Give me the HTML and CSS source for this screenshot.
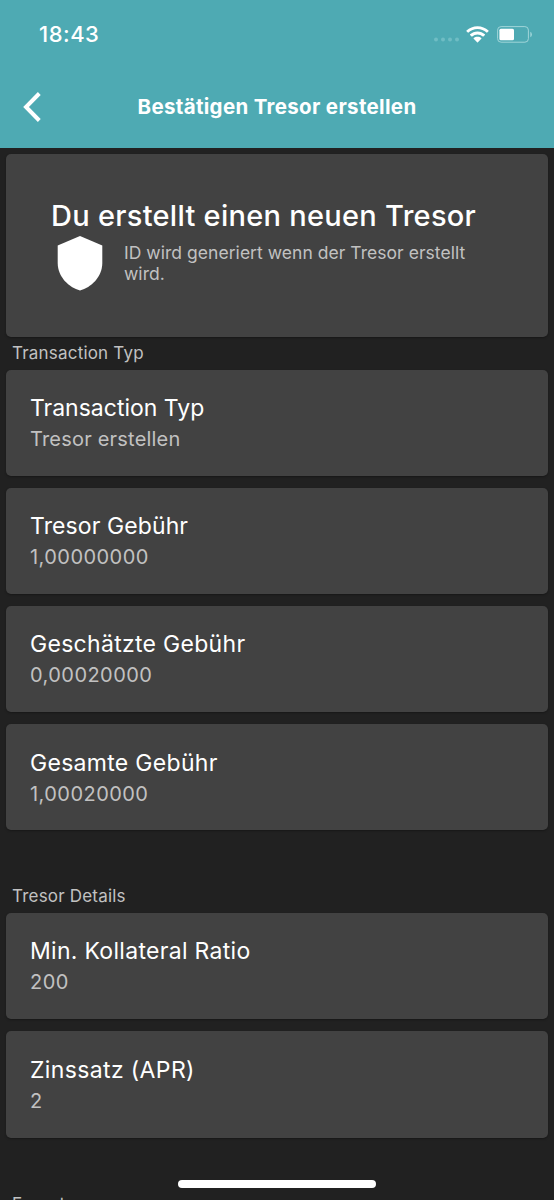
FILE: index.html
```html
<!DOCTYPE html>
<html lang="de">
<head>
<meta charset="utf-8">
<title>Bestätigen Tresor erstellen</title>
<link rel="stylesheet" href="styles.css">
</head>
<body>
<div class="screen">
  <header class="top">
    <div class="status">
      <span class="time">18:43</span>
      <div class="indicators">
        <svg class="signal" width="26" height="5" viewBox="0 0 26 5"><g fill="#6fbdc4"><circle cx="2" cy="2.5" r="2"/><circle cx="9" cy="2.5" r="2"/><circle cx="16" cy="2.5" r="2"/><circle cx="23" cy="2.5" r="2"/></g></svg>
        <svg class="wifi" width="23" height="17" viewBox="0 0 23 17"><path fill="#fff" d="M11.5.2C7.300.2 3.400 1.800.5 4.600Q.2 4.900.5 5.300L1.800 6.600Q2.200 6.900 2.500 6.600A13 13 0 0 1 20.500 6.600Q20.800 6.900 21.200 6.600L22.500 5.300Q22.800 4.900 22.500 4.600C19.600 1.800 15.700.2 11.500.2ZM11.500 5.500C8.600 5.500 6.100 6.600 4.100 8.300Q3.800 8.700 4.100 9L5.500 10.400Q5.900 10.700 6.200 10.400A8 8 0 0 1 16.800 10.400Q17.100 10.700 17.500 10.400L18.900 9Q19.200 8.700 18.900 8.300C16.900 6.600 14.400 5.500 11.500 5.500ZM11.500 10.700C10 10.700 8.700 11.200 7.700 12Q7.400 12.400 7.700 12.800L11.100 16.200Q11.500 16.600 11.900 16.200L15.300 12.800Q15.600 12.400 15.300 12C14.300 11.200 13 10.700 11.500 10.700Z"/></svg>
        <svg class="battery" width="36" height="17" viewBox="0 0 36 17"><rect x=".6" y=".6" width="30.800" height="15.600" rx="3.500" fill="none" stroke="#a0d5d9"/><rect x="2.400" y="2.700" width="14.600" height="11.500" rx="1.500" fill="#fff"/><path d="M33.300 5.700v5.500q1.600-.7 1.600-2.700t-1.600-2.800Z" fill="#a0d5d9"/></svg>
      </div>
    </div>
    <div class="nav">
      <svg class="back" width="18" height="30" viewBox="0 0 18 30"><path d="M16.300 1.500 3 15l13.300 13.500" fill="none" stroke="#fff" stroke-width="4"/></svg>
      <h1 class="heading">Bestätigen Tresor erstellen</h1>
    </div>
  </header>
  <main class="content">
    <section class="card intro">
      <h2 class="intro-title">Du erstellt einen neuen Tresor</h2>
      <div class="intro-row">
        <svg class="shield" width="46" height="55" viewBox="0 0 46 55"><path fill="#fff" d="M23 0 45.300 9.500V27C45.300 41 34 51.500 23 54.500 12 51.500.7 41 .7 27V9.500Z"/></svg>
        <p class="intro-text">ID wird generiert wenn der Tresor erstellt wird.</p>
      </div>
    </section>
    <h3 class="section">Transaction Typ</h3>
    <section class="list">
      <div class="card item"><span class="label tight">Transaction Typ</span><span class="value">Tresor erstellen</span></div>
      <div class="card item"><span class="label snug">Tresor Gebühr</span><span class="value amount">1,00000000</span></div>
      <div class="card item"><span class="label">Geschätzte Gebühr</span><span class="value amount">0,00020000</span></div>
      <div class="card item"><span class="label">Gesamte Gebühr</span><span class="value amount">1,00020000</span></div>
    </section>
    <h3 class="section later">Tresor Details</h3>
    <section class="list">
      <div class="card item"><span class="label">Min. Kollateral Ratio</span><span class="value amount">200</span></div>
      <div class="card item"><span class="label wide">Zinssatz (APR)</span><span class="value amount">2</span></div>
    </section>
    <h3 class="section later">Expert</h3>
  </main>
  <div class="home-bar"></div>
</div>
</body>
</html>
```
FILE: styles.css
```css
* { box-sizing: border-box; }
body { margin: 0; background: #212121; font-family: Inter, "Liberation Sans", sans-serif; }
h1, h2, h3, p { margin: 0; font-weight: 400; }
svg { display: block; flex: none; }
.screen { position: relative; width: 554px; height: 1200px; overflow: hidden; background: #212121; }
.top { height: 148px; background: #4eaab3; color: #fff; }
.status { height: 68px; padding: 0 21px 0 39px; display: flex; align-items: center; justify-content: space-between; }
.time { font-size: 22px; font-weight: 500; letter-spacing: .5px; }
.indicators { display: flex; align-items: center; }
.signal { margin: 11px 6px 0 0; }
.wifi { margin-right: 8px; }
.nav { height: 77px; padding-left: 23px; display: grid; grid-template-columns: 18px 1fr 41px; align-items: center; }
.heading { font-size: 20.500px; line-height: 25px; font-weight: 700; text-align: center; letter-spacing: .33px; padding-bottom: 1px; }
.content { padding: 6px 6px 0; }
.card { background: #424242; border-radius: 5px; box-shadow: 0 1px 2px #181818; }
.intro { height: 183px; padding: 44px 45px 0; }
.intro-title { color: #fff; font-size: 29px; line-height: 36px; font-weight: 500; letter-spacing: .28px; white-space: nowrap; }
.intro-row { display: flex; padding: 2px 0 0 6px; gap: 21px; }
.intro-text { width: 360px; padding-top: 7px; color: #c1c1c1; font-size: 17.500px; line-height: 20.500px; letter-spacing: .04px; }
.section { height: 32.700px; padding-left: 6px; color: #c1c1c1; font-size: 17px; line-height: 33px; letter-spacing: .2px; }
.section.later { margin-top: 50.050px; }
.list { display: grid; gap: 12px; }
.item { height: 106.200px; padding: 23.300px 24px 0; display: flex; flex-direction: column; }
.label { color: #fff; font-size: 23px; line-height: 31px; letter-spacing: .3px; }
.label.tight { letter-spacing: 0; }
.label.snug { letter-spacing: .1px; }
.label.wide { letter-spacing: .37px; }
.value { color: #c1c1c1; font-size: 20px; line-height: 30px; letter-spacing: .2px; }
.value.amount { letter-spacing: .45px; }
.home-bar { position: absolute; left: 178px; top: 1180px; width: 198px; height: 8px; border-radius: 4px; background: #fff; }
```
